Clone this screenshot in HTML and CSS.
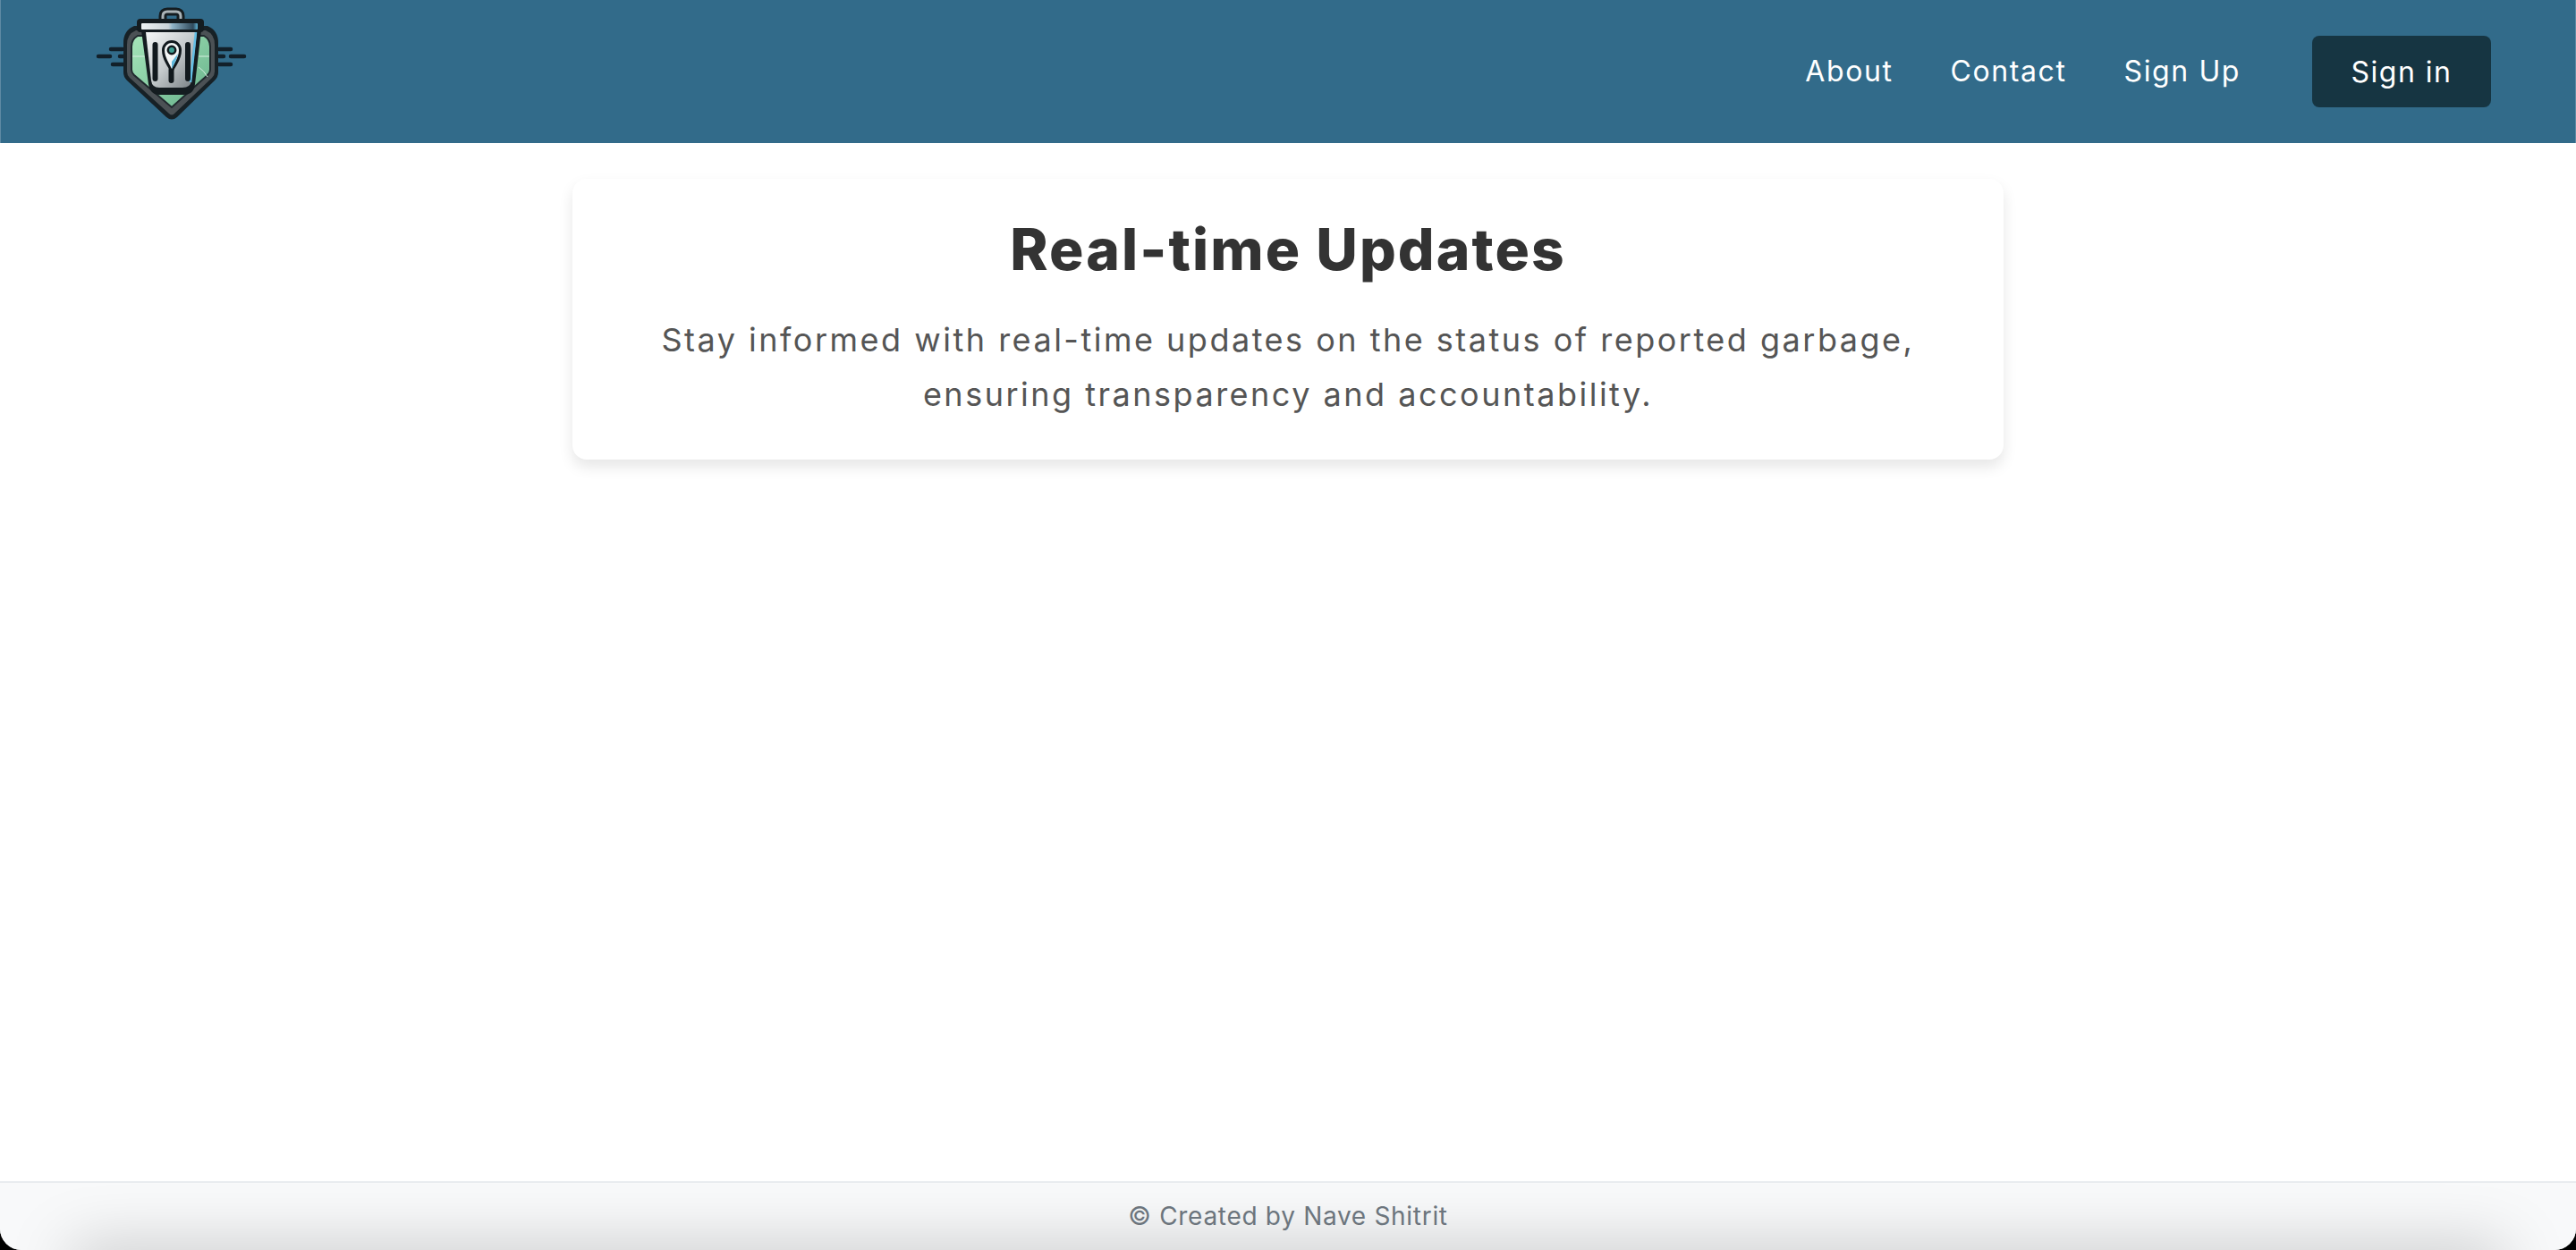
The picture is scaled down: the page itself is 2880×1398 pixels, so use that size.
FILE: index.html
```html
<!DOCTYPE html>
<html lang="en">
<head>
<meta charset="utf-8">
<title>Real-time Updates</title>
<link rel="stylesheet" href="styles.css">
</head>
<body>
<div class="page">
  <header class="topbar">
    <a class="logo" href="#" aria-label="Home">
      <svg class="logo-svg" viewBox="0 0 190 140" width="190" height="140" aria-hidden="true">
        <defs>
          <linearGradient id="lid" x1="0" x2="1" y1="0" y2="0">
            <stop offset="0" stop-color="#eef2f3"/>
            <stop offset=".48" stop-color="#c9d3d8"/>
            <stop offset=".55" stop-color="#8fb4c8"/>
            <stop offset=".92" stop-color="#2f4a5c"/>
            <stop offset="1" stop-color="#5fb4d6"/>
          </linearGradient>
          <linearGradient id="can" x1="0" x2="1" y1="0" y2="1">
            <stop offset="0" stop-color="#f5f7f7"/>
            <stop offset=".5" stop-color="#c4cacc"/>
            <stop offset="1" stop-color="#747c80"/>
          </linearGradient>
          <linearGradient id="field" x1="0" x2="1" y1="0" y2="1">
            <stop offset="0" stop-color="#a6e6ba"/>
            <stop offset="1" stop-color="#66b08a"/>
          </linearGradient>
        </defs>
        <path class="speed" d="M24 55H37M10 63H23M34 63H40M26 72H38M145 55H158M145 63H150M158 63H173M145 72H158"/>
        <path class="shield-out" d="M50 29 L132 29 Q144 34 144 48 L144 81 Q144 86 140 90 L98 131 Q92 136 86 131 L42 90 Q38 86 38 81 L38 48 Q38 34 50 29Z"/>
        <path class="shield-mid" d="M52 34 L130 34 Q140 38 140 50 L140 80 Q140 84 137 87 L95 127 Q92 130 89 127 L45 87 Q42 84 42 80 L42 50 Q42 38 52 34Z"/>
        <path class="shield-fill" d="M54 40 L128 40 Q135 44 135 52 L135 78 Q135 81 132 84 L92 120 L50 84 Q47 81 47 78 L47 52 Q47 44 54 40Z"/>
        <path class="map-line" d="M48 63H62M122 63H134M122 75 Q128 79 132 86"/>
        <path class="can-out" d="M58 34 H125 L118 94 Q117 106 105 106 H78 Q68 106 66 94Z"/>
        <path class="can-fill" d="M63 36 H120 L114 90 Q113 98 104 98 H78 Q70 98 69 90Z"/>
        <path class="can-edge" d="M119 36 L113 92"/>
        <path class="handle-out" d="M82 22 V18 Q82 13 87 13 H97 Q102 13 102 18 V22"/>
        <path class="handle-in" d="M82 22 V18 Q82 13 87 13 H97 Q102 13 102 18 V22"/>
        <rect class="lid-out" x="53" y="21" width="75" height="15" rx="4"/>
        <rect class="lid-in" x="58" y="26" width="63" height="7" rx="1"/>
        <path class="bars" d="M73.5 50 V88 M110 50 V88 M91.5 78 V90"/>
        <path class="pin-out" d="M92 83 C88 74 81 67 81 56 A11 11 0 0 1 103 56 C103 67 96 74 92 83Z"/>
        <path class="pin-in" d="M92 77 C89 70 84 64 84 56 A8 8 0 0 1 100 56 C100 64 95 70 92 77Z"/>
        <path class="pin-shade" d="M92 77 C95 71 98 66 99 60 L92 69Z"/>
        <circle class="pin-ring" cx="92" cy="56" r="4.2"/>
      </svg>
    </a>
    <nav class="nav">
      <a class="nav-link" href="#">About</a>
      <a class="nav-link" href="#">Contact</a>
      <a class="nav-link" href="#">Sign Up</a>
      <a class="signin" href="#">Sign in</a>
    </nav>
  </header>
  <main class="content">
    <section class="card">
      <h1 class="card-title">Real-time Updates</h1>
      <p class="card-text">Stay informed with real-time updates on the status of reported garbage, ensuring transparency and accountability.</p>
    </section>
  </main>
  <footer class="footer">
    <span class="footer-text">© Created by Nave Shitrit</span>
  </footer>
</div>
</body>
</html>
```
FILE: styles.css
```css
* { box-sizing: border-box; }
html, body { margin: 0; height: 100%; background: #000; }
body { font-family: Inter, "Noto Sans", sans-serif; }
.page {
  height: 1398px;
  display: flex;
  flex-direction: column;
  background: #fff;
  border-radius: 0 0 24px 24px;
  overflow: hidden;
}
.topbar {
  height: 160px;
  flex: none;
  background: #326b8a;
  border-left: 1px solid #5f8aa3;
  border-right: 1px solid #5f8aa3;
  display: flex;
  align-items: flex-start;
  justify-content: space-between;
  padding-left: 99px;
  padding-right: 94px;
}
.logo { display: block; height: 140px; }
.logo-svg { display: block; }
.speed { fill: none; stroke: #12202a; stroke-width: 4.5; stroke-linecap: round; }
.shield-out { fill: #172126; }
.shield-mid { fill: #4b5155; }
.shield-fill { fill: url(#field); stroke: #20292e; stroke-width: 2; }
.map-line { fill: none; stroke: #d6efe0; stroke-width: 1; }
.can-out { fill: #141c20; }
.can-fill { fill: url(#can); }
.can-edge { fill: none; stroke: #63bfe4; stroke-width: 2.5; }
.handle-out { fill: none; stroke: #141c20; stroke-width: 9; }
.handle-in { fill: none; stroke: #aab3b7; stroke-width: 3; }
.lid-out { fill: #141c20; }
.lid-in { fill: url(#lid); }
.bars { fill: none; stroke: #11191d; stroke-width: 6; stroke-linecap: round; }
.pin-out { fill: #11191d; }
.pin-in { fill: #f4f7f7; }
.pin-shade { fill: #5fb9dc; }
.pin-ring { fill: #3f9f93; stroke: #11191d; stroke-width: 2.5; }
.nav { display: flex; align-items: center; height: 158px; }
.nav-link {
  color: #fff;
  text-decoration: none;
  font-size: 32px;
  letter-spacing: 1.6px;
  margin-right: 64px;
}
.nav-link:nth-child(3) { margin-right: 80px; }
.signin {
  width: 200px;
  height: 80px;
  margin-top: 2px;
  display: flex;
  align-items: center;
  justify-content: center;
  background: #163542;
  border-radius: 8px;
  color: #fff;
  text-decoration: none;
  font-size: 32px;
  letter-spacing: 1.5px;
}
.content {
  flex: 1;
  display: flex;
  flex-direction: column;
  align-items: center;
  padding-top: 40px;
}
.card {
  width: 1600px;
  height: 314px;
  padding: 40px 60px 0;
  background: #fff;
  border-radius: 16px;
  box-shadow: 0 8px 16px rgba(0, 0, 0, 0.1);
  text-align: center;
}
.card-title {
  margin: 0 0 33px;
  font-size: 64px;
  line-height: 77px;
  font-weight: 800;
  letter-spacing: 2.1px;
  color: #333;
}
.card-text {
  margin: 0;
  font-size: 36px;
  line-height: 61px;
  color: #555;
  letter-spacing: 2.5px;
}
.footer {
  position: relative;
  height: 77px;
  flex: none;
  background: #f8f9fa;
  border-top: 2px solid #e9ecef;
  overflow: hidden;
  display: flex;
  justify-content: center;
  padding-top: 20px;
}
.footer::after {
  content: "";
  position: absolute;
  left: 80px;
  right: 80px;
  top: 100%;
  height: 40px;
  box-shadow: 0 0 70px rgba(0, 0, 0, 0.26);
}
.footer-text {
  position: relative;
  z-index: 1;
  font-size: 28px;
  line-height: 34px;
  color: #6c757d;
  letter-spacing: 0.7px;
}
```
